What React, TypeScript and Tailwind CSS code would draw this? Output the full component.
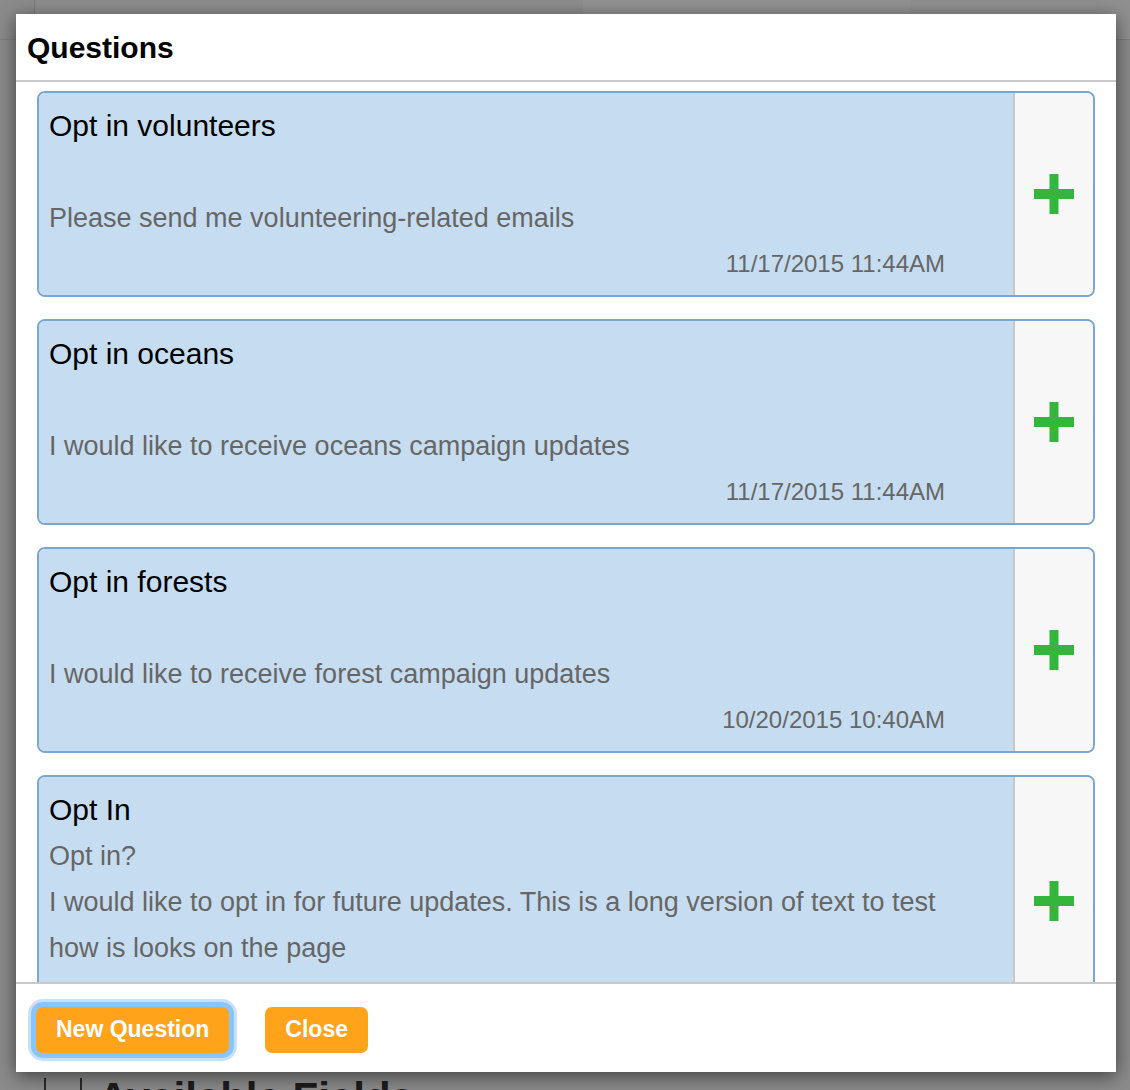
type Question = {
  key: string;
  title: string;
  prompt?: string;
  text: string;
  date: string;
};

const questions: Question[] = [
  {
    key: "volunteers",
    title: "Opt in volunteers",
    text: "Please send me volunteering-related emails",
    date: "11/17/2015 11:44AM",
  },
  {
    key: "oceans",
    title: "Opt in oceans",
    text: "I would like to receive oceans campaign updates",
    date: "11/17/2015 11:44AM",
  },
  {
    key: "forests",
    title: "Opt in forests",
    text: "I would like to receive forest campaign updates",
    date: "10/20/2015 10:40AM",
  },
  {
    key: "opt-in",
    title: "Opt In",
    prompt: "Opt in?",
    text: "I would like to opt in for future updates. This is a long version of text to test how is looks on the page",
    date: "11/17/2015 11:44AM",
  },
];

function PlusIcon() {
  return (
    <svg width="40" height="40" viewBox="0 0 40 40" aria-hidden="true">
      <rect x="15.5" y="0" width="9" height="40" fill="#34b53c" />
      <rect x="0" y="15" width="40" height="10" fill="#34b53c" />
    </svg>
  );
}

function QuestionCard({ q }: { q: Question }) {
  return (
    <div className="flex rounded-[8px] border-2 border-[#79a7cf] overflow-hidden shrink-0">
      <div className="flex-1 bg-[#c6ddf1] pl-[10px] pr-[68px] pt-[10px] pb-[8px] leading-[46px]">
        <div className="text-[30px] text-black">{q.title}</div>
        <div className="min-h-[46px] text-[27px] text-[#666]">{q.prompt}</div>
        <div className="text-[27px] text-[#666]">{q.text}</div>
        <div className="text-right text-[24px] text-[#666]">{q.date}</div>
      </div>
      <div className="w-[80px] shrink-0 flex items-center justify-center bg-[#f7f7f7] border-l-2 border-[#c8c8c8]">
        <PlusIcon />
      </div>
    </div>
  );
}

export default function App() {
  return (
    <div
      className="relative h-[1090px] w-[1130px] overflow-hidden bg-[#8b8b8b]"
      style={{ fontFamily: '"Liberation Sans", Arial, sans-serif' }}
    >
      {/* page behind the overlay */}
      <div className="flex h-[40px] border-b border-[#7f7f7f] text-[28px] text-[#3a3a3a]">
        <div className="w-[35px] border-r border-[#7a7a7a]" />
        <div className="w-[548px] pl-[113px] pt-[4px] bg-[#8e8e8e]">Design</div>
        <div className="w-[327px] pl-[8px] pt-[4px] bg-[#939393]">Status</div>
        <div className="flex-1 bg-[#909090]" />
      </div>
      <div className="absolute left-[44px] top-[1066px] flex items-center gap-[16px] text-[42px] font-bold text-[#1c1c1c]">
        <span className="flex h-[40px] w-[38px] items-center justify-center border-x-2 border-[#2a2a2a] text-[30px] font-normal">
          +
        </span>
        <span>Available Fields</span>
      </div>

      {/* modal */}
      <div className="absolute left-[16px] top-[14px] flex h-[1058px] w-[1100px] flex-col bg-white shadow-[0_4px_18px_rgba(0,0,0,0.55)]">
        <div className="flex h-[68px] shrink-0 items-center border-b-2 border-[#c9c9c9] pl-[11px]">
          <h2 className="text-[30px] font-bold text-black">Questions</h2>
        </div>

        <div className="flex flex-1 flex-col gap-[22px] overflow-hidden px-[21px] pt-[9px]">
          {questions.map((q) => (
            <QuestionCard key={q.key} q={q} />
          ))}
        </div>

        <div className="flex h-[90px] shrink-0 items-center gap-[36px] border-t-2 border-[#c9c9c9] pl-[20px] pt-[3px]">
          <button className="h-[46px] rounded-[7px] bg-[#ffa31a] px-[20px] text-[23px] font-bold text-white shadow-[0_0_0_5px_#89c4fb,0_0_0_8px_#c5e1fc]">
            New Question
          </button>
          <button className="h-[46px] rounded-[7px] bg-[#ffa31a] px-[20px] text-[23px] font-bold text-white">
            Close
          </button>
        </div>
      </div>
    </div>
  );
}
